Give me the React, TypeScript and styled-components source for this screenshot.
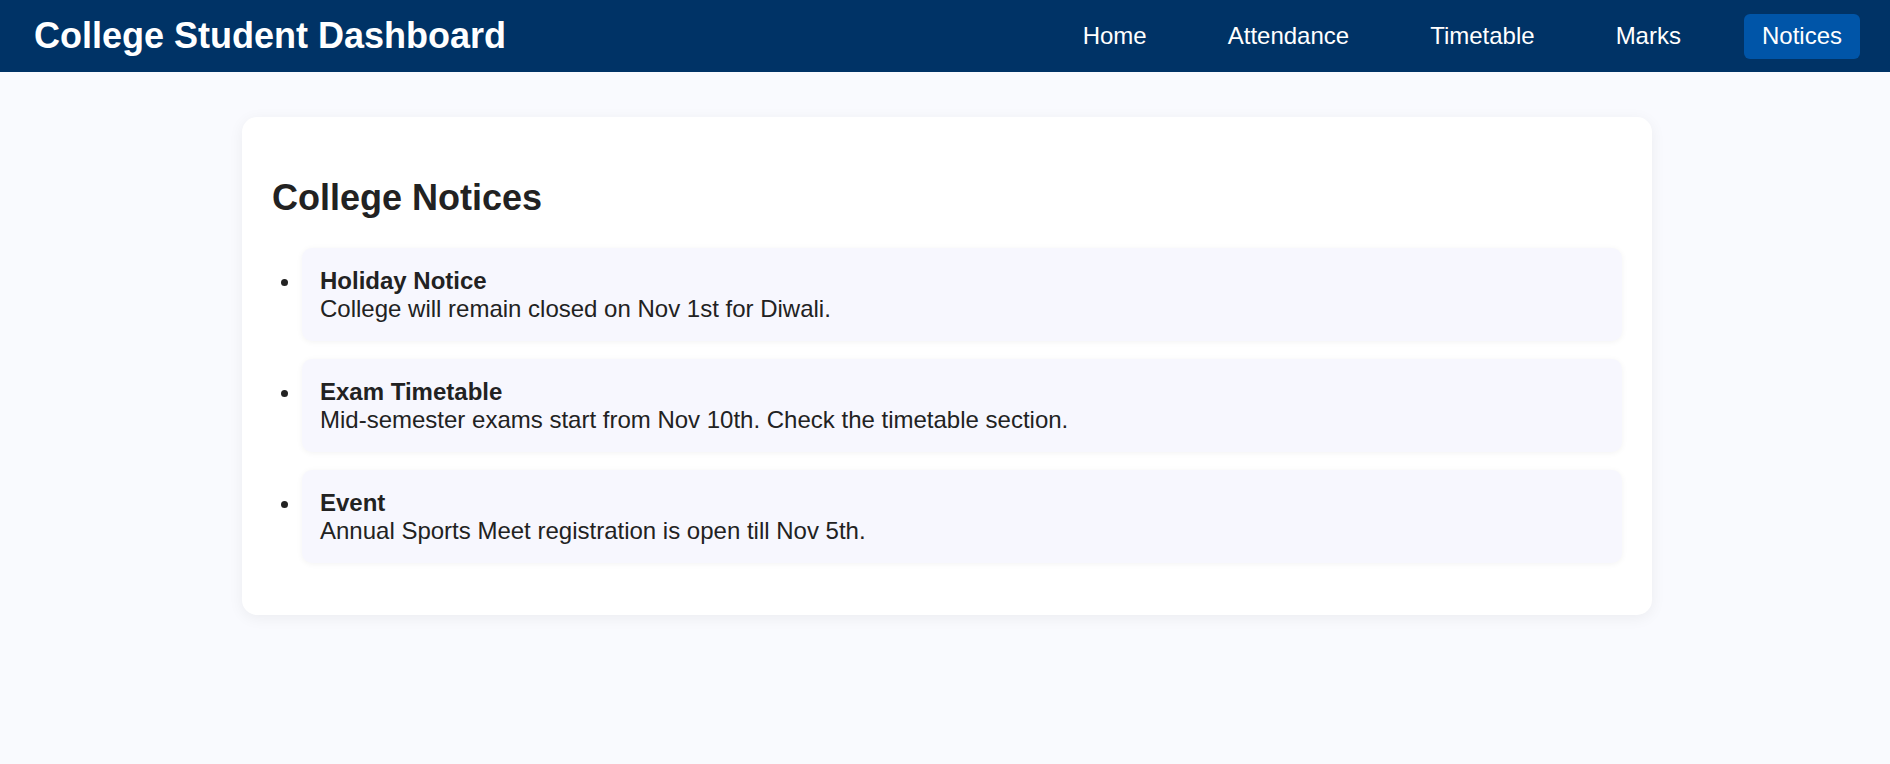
import React from "react";
import styled, { createGlobalStyle } from "styled-components";

const GlobalStyle = createGlobalStyle`
  html, body {
    margin: 0;
    padding: 0;
    background: #f9fafe;
    font-family: "Liberation Sans", Arial, sans-serif;
    font-size: 24px;
    color: #222222;
  }
`;

const Header = styled.header`
  height: 72px;
  box-sizing: border-box;
  background: #003366;
  color: #ffffff;
  display: flex;
  align-items: center;
  justify-content: space-between;
  padding: 0 30px 0 34px;
`;

const Title = styled.h1`
  margin: 0;
  font-size: 36px;
  font-weight: 700;
  letter-spacing: 0;
`;

const Nav = styled.nav`
  display: flex;
  align-items: center;
  gap: 45px;
`;

const NavLink = styled.a<{ $active?: boolean }>`
  display: block;
  color: #ffffff;
  text-decoration: none;
  font-size: 24px;
  line-height: 27px;
  padding: 8px 18px 10px;
  border-radius: 6px;
  background: ${(p) => (p.$active ? "#0055a8" : "transparent")};
  cursor: pointer;
`;

const Main = styled.main`
  padding: 45px 30px 45px 34px;
`;

const Card = styled.section`
  max-width: 1350px;
  margin: 0 auto;
  background: #ffffff;
  border-radius: 15px;
  padding: 30px;
  box-shadow: 0 3px 15px rgba(0, 0, 0, 0.06);
`;

const Heading = styled.h2`
  font-size: 36px;
  font-weight: 700;
  margin: 30px 0;
  line-height: 41px;
`;

const List = styled.ul`
  margin: 0 0 22px;
  padding-left: 30px;
  list-style: disc;
`;

const Item = styled.li`
  background: #f7f7fe;
  border-radius: 10px;
  padding: 19px 18px;
  line-height: 27.5px;
  box-shadow: 0 1px 6px rgba(0, 0, 0, 0.05);
  & + & {
    margin-top: 18px;
  }
`;

const ItemTitle = styled.strong`
  display: block;
  font-weight: 700;
`;

const ItemText = styled.span`
  display: block;
`;

const notices = [
  { title: "Holiday Notice", text: "College will remain closed on Nov 1st for Diwali." },
  { title: "Exam Timetable", text: "Mid-semester exams start from Nov 10th. Check the timetable section." },
  { title: "Event", text: "Annual Sports Meet registration is open till Nov 5th." },
];

const links = ["Home", "Attendance", "Timetable", "Marks", "Notices"];

export default function App() {
  return (
    <>
      <GlobalStyle />
      <Header>
        <Title>College Student Dashboard</Title>
        <Nav>
          {links.map((l) => (
            <NavLink key={l} $active={l === "Notices"}>
              {l}
            </NavLink>
          ))}
        </Nav>
      </Header>
      <Main>
        <Card>
          <Heading>College Notices</Heading>
          <List>
            {notices.map((n) => (
              <Item key={n.title}>
                <ItemTitle>{n.title}</ItemTitle>
                <ItemText>{n.text}</ItemText>
              </Item>
            ))}
          </List>
        </Card>
      </Main>
    </>
  );
}
